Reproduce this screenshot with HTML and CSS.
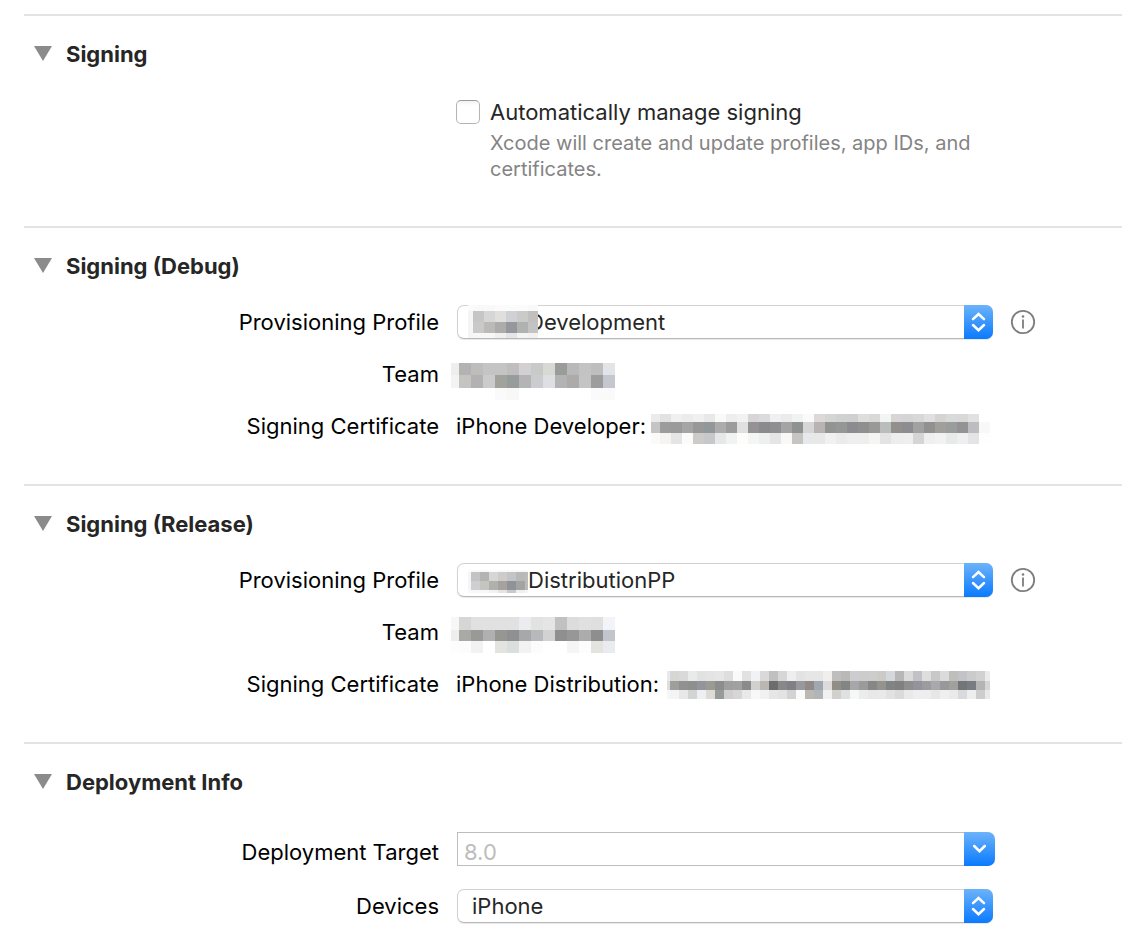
FILE: index.html
```
<!DOCTYPE html>
<html lang="en">
<head>
<meta charset="utf-8">
<title>Signing</title>
<link rel="stylesheet" href="styles.css">
</head>
<body>
<svg class="defs" aria-hidden="true">
  <symbol id="updown" viewBox="0 0 29 34"><path d="M9 14.200L14.500 9L20 14.200M9 20L14.500 25.200L20 20"/></symbol>
  <symbol id="down" viewBox="0 0 31 34"><path d="M10.200 14L15.500 19.200L20.800 14"/></symbol>
  <symbol id="info" viewBox="0 0 26 26"><circle cx="13" cy="13" r="11.200" fill="none" stroke="#7d7d7d" stroke-width="1.800"/><circle cx="13" cy="7.500" r="1.300" fill="#7d7d7d"/><path d="M13 10.500V19.500" stroke="#7d7d7d" stroke-width="1.800"/></symbol>
</svg>
<main class="settings">
  <section class="section">
    <h2 class="title"><svg class="triangle" viewBox="0 0 18 16"><path d="M0 0H18L9 15Z"/></svg>Signing</h2>
    <div class="form form-check">
      <div class="field check">
        <input class="checkbox" type="checkbox" id="auto">
        <label class="check-label" for="auto">Automatically manage signing</label>
        <p class="hint">Xcode will create and update profiles, app IDs, and certificates.</p>
      </div>
    </div>
  </section>

  <section class="section">
    <h2 class="title"><svg class="triangle" viewBox="0 0 18 16"><path d="M0 0H18L9 15Z"/></svg>Signing (Debug)</h2>
    <div class="form">
      <label class="label" for="profile-debug">Provisioning Profile</label>
      <div class="field popup">
        <select class="select select-masked" id="profile-debug"><option>Development</option></select>
        <svg class="arrows"><use href="#updown"/></svg>
        <svg class="mosaic over-profile-debug" data-mosaic="profileDebug"></svg>
      </div>
      <button class="info" type="button" aria-label="Profile information"><svg class="info-icon"><use href="#info"/></svg></button>
      <span class="label">Team</span>
      <div class="field value"><svg class="mosaic over-team-debug" data-mosaic="teamDebug"></svg></div>
      <span class="label">Signing Certificate</span>
      <div class="field value">iPhone Developer:<svg class="mosaic cert-debug" data-mosaic="certDebug"></svg></div>
    </div>
  </section>

  <section class="section">
    <h2 class="title"><svg class="triangle" viewBox="0 0 18 16"><path d="M0 0H18L9 15Z"/></svg>Signing (Release)</h2>
    <div class="form">
      <label class="label" for="profile-release">Provisioning Profile</label>
      <div class="field popup">
        <select class="select select-masked" id="profile-release"><option>DistributionPP</option></select>
        <svg class="arrows"><use href="#updown"/></svg>
        <svg class="mosaic over-profile-release" data-mosaic="profileRelease"></svg>
      </div>
      <button class="info" type="button" aria-label="Profile information"><svg class="info-icon"><use href="#info"/></svg></button>
      <span class="label">Team</span>
      <div class="field value"><svg class="mosaic over-team-release" data-mosaic="teamRelease"></svg></div>
      <span class="label">Signing Certificate</span>
      <div class="field value">iPhone Distribution:<svg class="mosaic cert-release" data-mosaic="certRelease"></svg></div>
    </div>
  </section>

  <section class="section">
    <h2 class="title"><svg class="triangle" viewBox="0 0 18 16"><path d="M0 0H18L9 15Z"/></svg>Deployment Info</h2>
    <div class="form form-deploy">
      <label class="label label-combo" for="target">Deployment Target</label>
      <div class="field combo">
        <input class="combo-input" type="text" id="target" placeholder="8.0">
        <button class="combo-button" type="button" aria-label="Show versions"><svg class="combo-icon"><use href="#down"/></svg></button>
      </div>
      <label class="label" for="devices">Devices</label>
      <div class="field popup">
        <select class="select" id="devices"><option>iPhone</option></select>
        <svg class="arrows"><use href="#updown"/></svg>
      </div>
    </div>
  </section>
</main>
<script src="mosaic.js"></script>
</body>
</html>
```
FILE: styles.css
```
* { box-sizing: border-box; }

body {
  margin: 0;
  background: #fff;
  color: #000;
  font-family: Inter, "Liberation Sans", sans-serif;
  font-size: 22px;
  line-height: 28px;
}

.defs { position: absolute; width: 0; height: 0; }

.settings { padding: 14px 0 0 24px; }

.section {
  border-top: 2px solid #e3e3e3;
  padding: 24px 0 41px;
}

.title {
  display: flex;
  align-items: center;
  gap: 14px;
  margin: 0 0 25px 10px;
  font-size: 22px;
  font-weight: 700;
  color: #262626;
}

.triangle { width: 18px; height: 16px; fill: #8b8b8b; }

.form {
  display: grid;
  grid-template-columns: 415fr 537fr 112fr;
  column-gap: 17px;
  row-gap: 18px;
  align-items: center;
}

.label { grid-column: 1; text-align: right; white-space: nowrap; }
.field { grid-column: 2; }

.form-check { padding: 6px 0 3px; }

.check {
  display: grid;
  grid-template-columns: 24px 1fr;
  column-gap: 10px;
  row-gap: 5px;
  align-items: center;
  line-height: 26px;
}

.checkbox {
  appearance: none;
  width: 24px;
  height: 24px;
  margin: 0;
  border: 1px solid #b4b4b4;
  border-top-color: #9c9c9c;
  border-radius: 5px;
  background: linear-gradient(#f3f3f3, #fff 5px);
}

.check-label { color: #262626; }

.hint {
  grid-column: 2;
  margin: 0;
  font-size: 20px;
  color: #848484;
}

.popup { position: relative; padding-left: 1px; height: 34px; }

.select {
  appearance: none;
  display: block;
  width: 100%;
  height: 34px;
  padding: 0 36px 0 14px;
  border: 1px solid #d2d2d2;
  border-bottom-color: #b8b8b8;
  border-radius: 7px;
  background: #fff;
  box-shadow: 0 1px 1px #e8e8e8;
  color: #262626;
  font: inherit;
}

.select-masked { padding-left: 70px; }

.arrows {
  position: absolute;
  top: 0;
  right: 0;
  width: 29px;
  height: 34px;
  border-radius: 0 7px 7px 0;
  background: linear-gradient(#6cb3fa, #0a7aff);
  fill: none;
  stroke: #fff;
  stroke-width: 2.5;
  stroke-linecap: round;
  pointer-events: none;
}

.info {
  display: flex;
  width: 26px;
  height: 26px;
  padding: 0;
  border: 0;
  background: none;
}

.info-icon { width: 26px; height: 26px; }

.value {
  position: relative;
  display: flex;
  align-items: center;
  height: 34px;
  white-space: nowrap;
}

.mosaic { display: block; flex: none; }
.cert-debug { margin: 5px 0 0 5px; }
.cert-release { margin: 2px 0 0 8px; }

.over-profile-debug { position: absolute; left: 12px; top: 0; }
.over-profile-release { position: absolute; left: 12px; top: 7px; }
.over-team-debug { position: absolute; left: -5px; top: 6px; }
.over-team-release { position: absolute; left: -5px; top: 2px; }

.form-deploy { padding-top: 11px; row-gap: 23px; }

.label-combo { padding-top: 6px; }

.combo {
  display: flex;
  height: 34px;
  margin: 0 -2px 0 1px;
}

.combo-input {
  flex: 1;
  min-width: 0;
  padding: 6px 6px 0;
  border: 1px solid #bdbdbd;
  border-right: 0;
  border-radius: 0;
  background: #fff;
  font: inherit;
}

.combo-input::placeholder { color: #bdbdbd; opacity: 1; }

.combo-button {
  width: 31px;
  height: 34px;
  padding: 0;
  border: 0;
  border-radius: 0 7px 7px 0;
  background: linear-gradient(#6cb3fa, #0a7aff);
}

.combo-icon {
  display: block;
  width: 31px;
  height: 34px;
  fill: none;
  stroke: #fff;
  stroke-width: 2.5;
  stroke-linecap: round;
}
```
FILE: mosaic.js
```
// Pixelated masks for private names. Each row lists cell colours: two digits
// for a grey level, six digits for a full colour.
const mosaics = {
  profileDebug: { first: 5, cell: 11, last: 10, heights: [6, 11, 11, 5], rows: [
    "fb f9 f9 fb fb fb f9",
    "f5 c6 d6 e0dfdd cfd1d4 cacbc9 c1c0be",
    "f5 c9 bcbab8 acacaa 96979d b0b1b1 c3",
    "f5 f7 f7 f0 e4e6e6 f4 f2"
  ] },
  profileRelease: { first: 3, cell: 9, last: 3, heights: [2, 9, 9, 3], rows: [
    "fb f8 f8 fb f9 f9 f9 f9",
    "f5 c3 b3b4b0 d6 cfcbcb c2c4c6 b9b8b9 bb",
    "f5 cfcfd1 c4c5c1 b0b0ad a8a29f 8f9397 a3 bb",
    "f8 f7 f7 f2 e4e4e3 c7c9cc f0 f5"
  ] },
  teamDebug: { first: 8, cell: 12, last: 12, heights: [12, 13, 12], rows: [
    "ee b3 bebdbb c4 c4 bfbdbd d2d0d3 c8cac8 d8d8d5 9a9c9a b9 c3 be e2e4e7",
    "f3 c6c4c1 b2 cb a2a29d 969b9c b4 cbccd0 dedfe3 b3 adaba8 c4 9d c4c8ce",
    "ff ff ff ff fa f8 ff ff ff ff ff ff fa fa"
  ] },
  teamRelease: { first: 8, cell: 12, last: 12, heights: [13, 11, 12], rows: [
    "f7 d6 e1 e1 e1 e1 ebecef e2e3e0 e5 c1 dbdcdd e0 df f2f4f7",
    "ee a9a9a6 999996 b0b0b3 969693 8f9092 a8a8ab b8b9bb d2 8f 97 ac 8e c2c6cc",
    "fd fc f2 ff e3e3e0 dadfdd f2 fc ff ff f5 fd e3e3e0 e9ebee"
  ] },
  certDebug: { first: 9, cell: 11, last: 11, heights: [8, 11, 11], rows: [
    "eb e2 f0 ec f0 e8 f9 ee f2 d7d5d7 dbdbde f0 eb f0f3f2 fa ddd9da d5 d0d2d1 d0 dcdfde dad9d7 f3f5f5 d8d5d6 d5 d8 e0 d6d4d2 d9dbda d9 e1 ff",
    "c5 9c 9a a5 98 929899 ac 9c e0 959293 8b8b8e 8f8e90 a4 8f9290 d6 b9b4b3 929392 949796 8b8b90 8f 999997 b9bdbb 92908d 8d8d91 a1 93918f a09f9a 9a9d9b 939393 bcbcc1 f8",
    "fa f5f4f3 e5 fb cccbc9 c6c8ca e7 f0f3f2 fdfdfb f4f6f6 eef0f0 e5 f8 c5c4c2 e7e8eb e8 f1 eb ee ee f5f5f3 e3 ebeeed ee d5 ef f2 e7eae9 ef e4e4e7 fe"
  ] },
  certRelease: { first: 3, cell: 9, last: 5, heights: [10, 9, 9], rows: [
    "e9 d6d6d4 d9 e8ebea e2 e4 e6 de fa e1 f0f2f5 d9 c0 d6d6d8 ee e3 e6 e6 f0efee bfbebc b9 cdcdcf cc cd cbcac7 d5d8da b9b6b7 da c1c1c6 de c8 db bfbebc c1c3c7 c9cccb d1 eb",
    "dd 9e9e9b 91 8f 93959a 9c9a95 8c8d8f a09f9e a1 8a8c8b d1d0cd bab6b4 6c 88 808086 98999d 908b89 a0a7b0 dcdbd9 938d88 828584 a7a7ab 9b 868887 94938e 828385 80 8e 92939b 9d9b9d a8a9ac 98 a0a09d 737677 797d83 b4 d5",
    "f6 f4 e8 d3 eeeff4 dcdbd6 979b98 cf d6 e9 f8 f1 e6 e3 d3 fa bcb8b2 b0b5b8 f1 d0d1cd dfe1e0 f6f8f8 ec e8 e9 e2 da e9 ee ee e7 ef ea d8dade ee cd e9"
  ] }
};

for (const svg of document.querySelectorAll("[data-mosaic]")) {
  const { first, cell, last, heights, rows } = mosaics[svg.dataset.mosaic];
  let y = 0;
  let width = 0;
  rows.forEach((row, r) => {
    const colors = row.split(" ");
    let x = 0;
    colors.forEach((color, c) => {
      const w = c === 0 ? first : c === colors.length - 1 ? last : cell;
      const rect = document.createElementNS("http://www.w3.org/2000/svg", "rect");
      rect.setAttribute("x", x);
      rect.setAttribute("y", y);
      rect.setAttribute("width", w);
      rect.setAttribute("height", heights[r]);
      rect.setAttribute("fill", "#" + (color.length === 2 ? color.repeat(3) : color));
      svg.appendChild(rect);
      x += w;
    });
    width = x;
    y += heights[r];
  });
  svg.setAttribute("width", width);
  svg.setAttribute("height", y);
}
```
